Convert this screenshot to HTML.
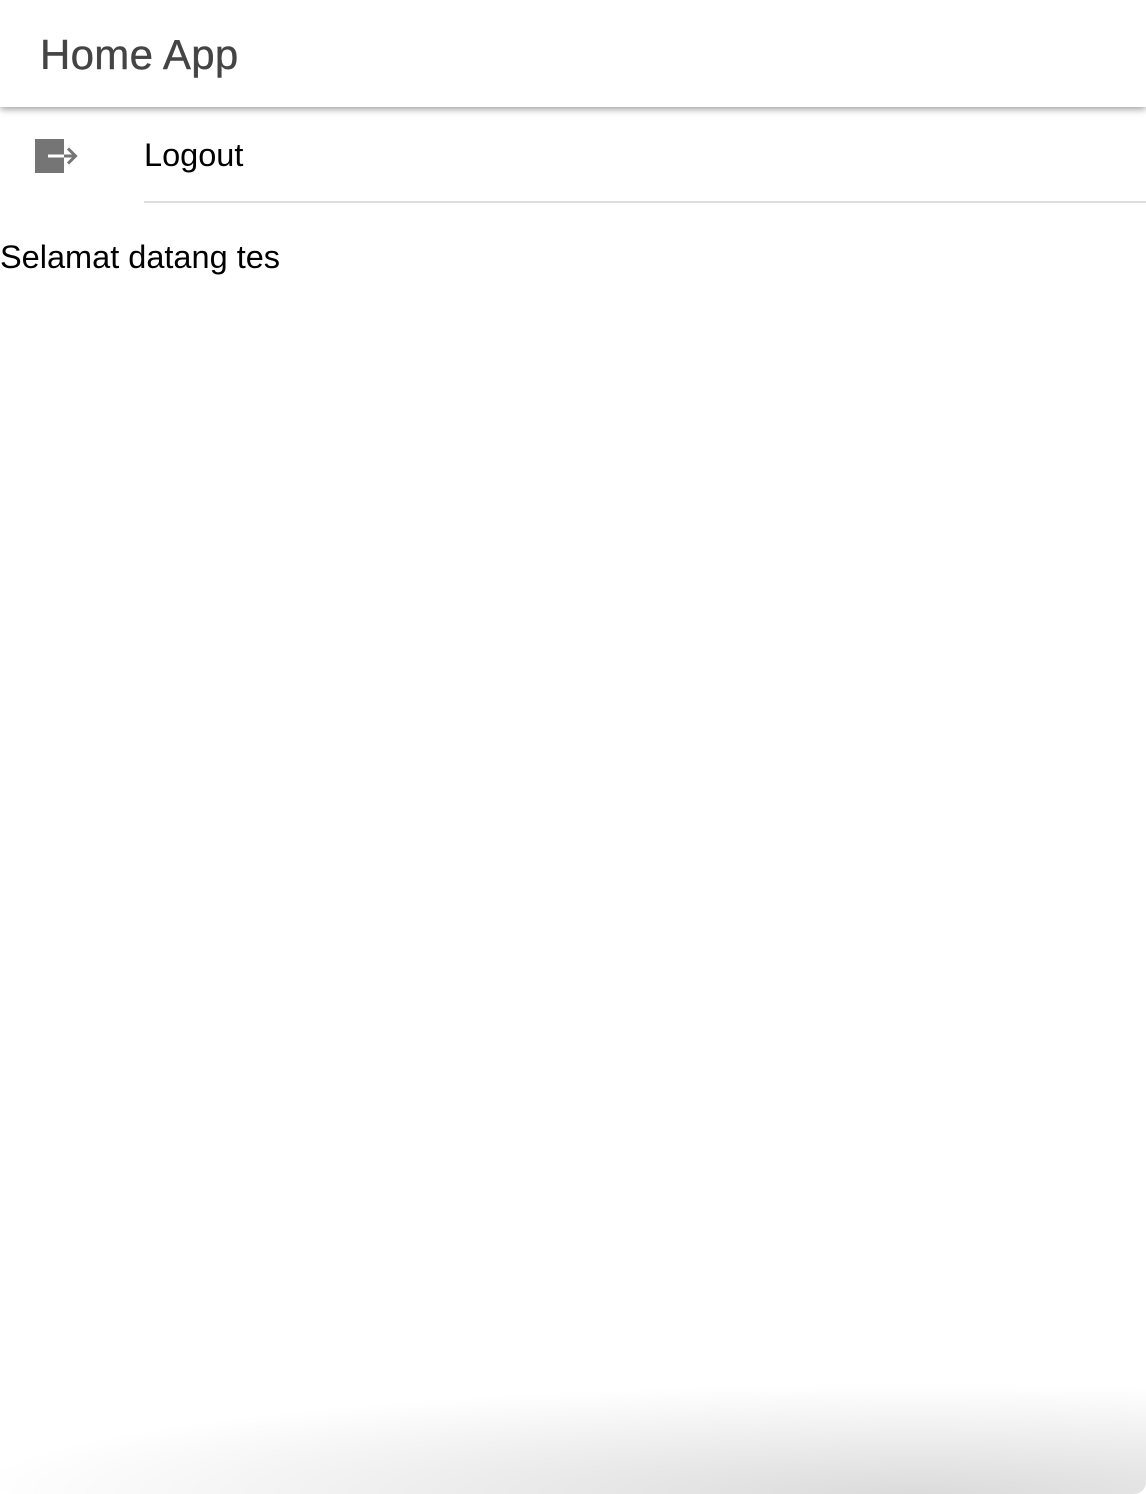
<!DOCTYPE html>
<html><head><style>
html,body{margin:0;padding:0;width:1146px;height:1494px;background:#fff;overflow:hidden;position:relative;font-family:"Liberation Sans",sans-serif}
.hdr{position:absolute;left:0;top:0;width:1146px;height:107px;background:#fff;box-shadow:0 2px 7px rgba(0,0,0,.4);z-index:2}
.hdr span{position:absolute;left:40px;top:31px;font-size:42px;color:#444;letter-spacing:0.3px;-webkit-text-stroke:0.4px #444}
.logout{position:absolute;left:144px;top:137px;font-size:32.5px;color:#000}
.line{position:absolute;left:144px;top:201px;right:0;height:2px;background:#ddd}
.welcome{position:absolute;left:0;top:239px;font-size:32.5px;color:#000}
.bot{position:absolute;left:0;right:0;bottom:0;height:110px;background:radial-gradient(ellipse 950px 110px at 80% 100%,rgba(0,0,0,.14),rgba(0,0,0,0) 100%);border-radius:0 0 12px 12px}
</style></head><body>
<div class="hdr"><span>Home App</span></div>
<svg style="position:absolute;left:34px;top:138px" width="46" height="36" viewBox="0 0 46 36">
<rect x="1" y="1" width="29" height="34" fill="#757575"/>
<path d="M14 18H41" stroke="#fff" stroke-width="3"/>
<path d="M30 18H41" stroke="#757575" stroke-width="3"/>
<path d="M34 10.5L41.5 18L34 25.5" stroke="#757575" stroke-width="3" fill="none"/>
</svg>
<div class="logout">Logout</div>
<div class="line"></div>
<div class="welcome">Selamat datang tes</div>
<div class="bot"></div>
</body></html>
